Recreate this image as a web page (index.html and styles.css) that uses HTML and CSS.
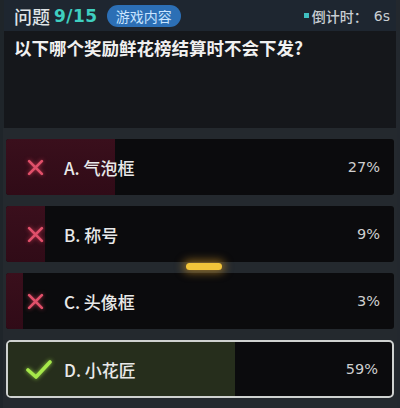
FILE: index.html
```html
<!DOCTYPE html>
<html lang="zh">
<head>
<meta charset="utf-8">
<link rel="stylesheet" href="styles.css">
</head>
<body>
<div class="screen">
  <header class="topbar">
    <div class="title">
      <span class="label">问题</span>
      <span class="count">9/15</span>
      <span class="badge">游戏内容</span>
    </div>
    <div class="timer">
      <span class="dot"></span>
      <span>倒计时：</span><span class="sec">6s</span>
    </div>
  </header>
  <div class="question">以下哪个奖励鲜花榜结算时不会下发?</div>
  <div class="options">
    <div class="option wrong">
      <div class="fill" style="width:28%"></div>
      <div class="icon"><svg viewBox="0 0 16 16" width="17" height="17"><path d="M2 2 L14 14 M14 2 L2 14" stroke="#e0506a" stroke-width="2.6" stroke-linecap="round"/></svg></div>
      <div class="text">A. 气泡框</div>
      <div class="pct">27%</div>
    </div>
    <div class="option wrong">
      <div class="fill" style="width:10%"></div>
      <div class="icon"><svg viewBox="0 0 16 16" width="17" height="17"><path d="M2 2 L14 14 M14 2 L2 14" stroke="#e0506a" stroke-width="2.6" stroke-linecap="round"/></svg></div>
      <div class="text">B. 称号</div>
      <div class="pct">9%</div>
    </div>
    <div class="option wrong">
      <div class="fill" style="width:4.5%"></div>
      <div class="icon"><svg viewBox="0 0 16 16" width="17" height="17"><path d="M2 2 L14 14 M14 2 L2 14" stroke="#e0506a" stroke-width="2.6" stroke-linecap="round"/></svg></div>
      <div class="text">C. 头像框</div>
      <div class="pct">3%</div>
    </div>
    <div class="option right">
      <div class="fill" style="width:59%"></div>
      <div class="icon"><svg viewBox="0 0 28 22" width="28" height="22"><path d="M3 12 L11 19 L25 4" fill="none" stroke="#a6e84a" stroke-width="3.6" stroke-linecap="round" stroke-linejoin="round"/></svg></div>
      <div class="text">D. 小花匠</div>
      <div class="pct">59%</div>
    </div>
    <div class="glow"></div>
  </div>
</div>
</body>
</html>
```

FILE: styles.css
```css
* { box-sizing: border-box; }
html, body { margin: 0; padding: 0; }
body {
  width: 400px;
  height: 408px;
  overflow: hidden;
  background: #15181c;
  font-family: "Noto Sans CJK SC", "Noto Sans", sans-serif;
}
.screen {
  width: 400px;
  height: 408px;
  display: flex;
  flex-direction: column;
  background: #15171b;
  border-left: 4px solid #1f252a;
  border-right: 4px solid #23282e;
}
.topbar {
  height: 31px;
  background: #1e2630;
  display: flex;
  align-items: center;
  justify-content: space-between;
  padding: 0 6px 0 10px;
}
.title {
  display: flex;
  align-items: center;
  gap: 4px;
}
.label {
  font-size: 18px;
  color: #dfe3e6;
  font-weight: 500;
}
.count {
  font-size: 17px;
  color: #3fcfc0;
  font-weight: 700;
  font-family: "DejaVu Sans", sans-serif;
  letter-spacing: 0.5px;
}
.badge {
  margin-left: 5px;
  background: #2c6fb5;
  color: #c8e4ff;
  font-size: 14px;
  padding: 1px 9px;
  border-radius: 11px;
  line-height: 20px;
}
.timer {
  display: flex;
  align-items: center;
  color: #c9ced3;
  font-size: 14px;
  font-weight: 500;
}
.dot {
  width: 5px;
  height: 5px;
  background: #3fbfc0;
  margin-right: 3px;
}
.sec {
  margin-left: 6px;
  font-family: "DejaVu Sans", sans-serif;
  font-size: 14px;
}
.question {
  padding: 5px 0 0 10px;
  height: 97px;
  color: #f0f0f0;
  font-size: 17.5px;
  font-weight: 700;
  line-height: 23px;
}
.options {
  position: relative;
  flex: 1;
  background: #24292e;
  padding: 11px 3px 0 3px;
  display: flex;
  flex-direction: column;
  gap: 11px;
  margin: 0 -1px;
}
.option {
  position: relative;
  height: 56px;
  background: #0b0b0d;
  display: flex;
  align-items: center;
  border-radius: 3px;
  overflow: hidden;
}
.fill {
  position: absolute;
  left: 0;
  top: 0;
  bottom: 0;
}
.wrong .fill { background: linear-gradient(#3a0f1c, #300b17); }
.right .fill { background: #262e1c; }
.right {
  border: 2px solid #cfd2d0;
  border-radius: 5px;
  height: 58px;
}
.icon {
  position: relative;
  width: 58px;
  display: flex;
  justify-content: center;
  align-items: center;
}
.wrong .icon svg { filter: drop-shadow(0 0 2px rgba(230,60,90,0.7)); }
.right .icon { width: 56px; padding-left: 6px; }
.right .icon svg { filter: drop-shadow(0 0 2px rgba(160,230,70,0.8)); }
.text {
  position: relative;
  flex: 1;
  color: #e9e9e9;
  font-size: 17px;
  font-weight: 500;
}
.pct {
  position: relative;
  color: #cfcfcf;
  font-family: "DejaVu Sans", sans-serif;
  font-size: 14.5px;
  padding-right: 14px;
}
.glow {
  position: absolute;
  left: 183px;
  top: 135px;
  width: 36px;
  height: 7px;
  border-radius: 4px;
  background: #f2c43a;
  box-shadow: 0 0 8px 3px rgba(240,170,40,0.5);
}
```
